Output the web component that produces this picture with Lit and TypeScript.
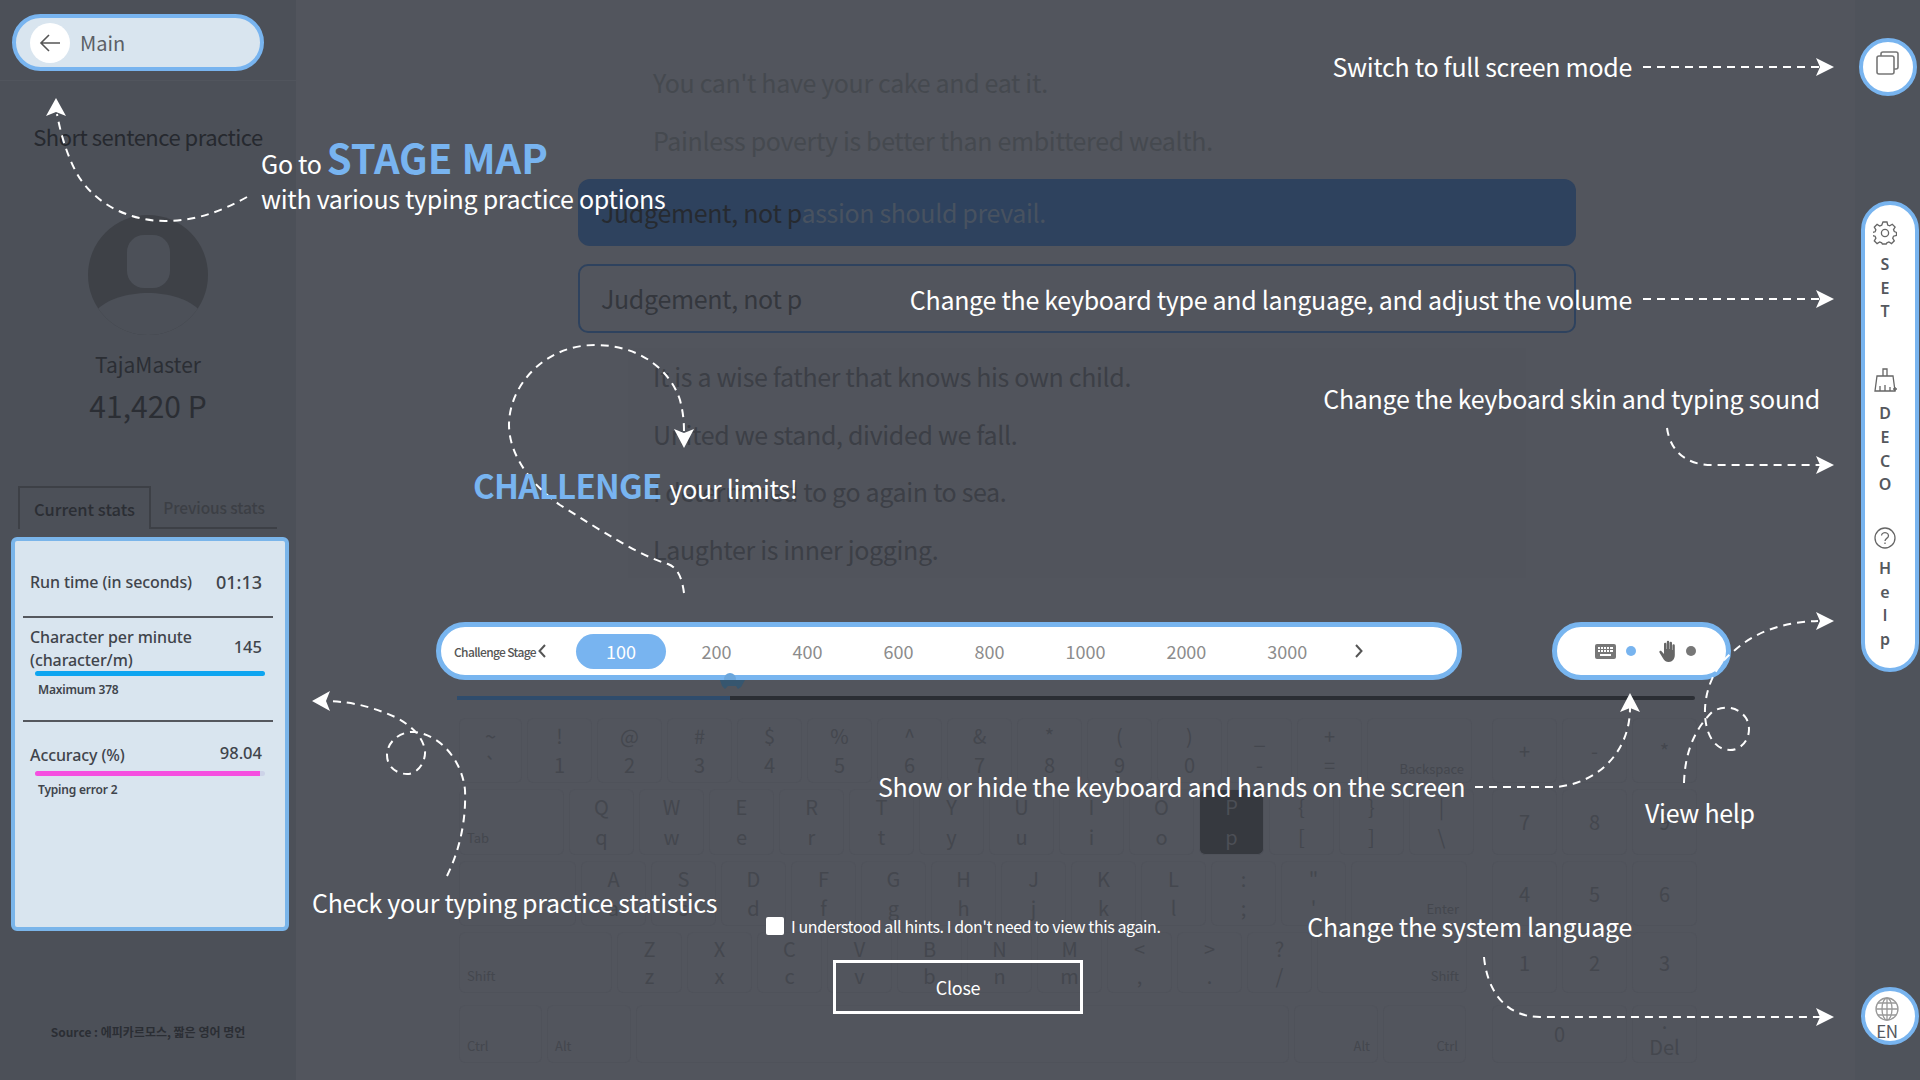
import { LitElement, html, css, svg } from 'lit';
import { customElement } from 'lit/decorators.js';

const topRows = ["You can't have your cake and eat it.", 'Painless poverty is better than embittered wealth.'];
const lowerRows = [
  'It is a wise father that knows his own child.',
  'United we stand, divided we fall.',
  'I determined to go again to sea.',
  'Laughter is inner jogging.',
];
const stages = ['200', '400', '600', '800', '1000', '2000', '3000'];

type Key = { up?: string; low?: string; label?: string; w?: number; side?: string; on?: boolean };
const pair = (s: string): Key[] => s.split(' ').map((p) => ({ up: p[0], low: p[1] }));

const keyRows: Key[][] = [
  [{ up: '~', low: '`', w: 63 }, ...pair('!1 @2 #3 $4 %5 ^6 &7 *8 (9 )0 _- +='), { label: 'Backspace', w: 105, side: 'right drop' }],
  [{ label: 'Tab', w: 105 }, ...pair('Qq Ww Ee Rr Tt Yy Uu Ii Oo'), { up: 'P', low: 'p', on: true }, ...pair('{[ }] |\\')],
  [{ label: '', w: 117 }, ...pair('Aa Ss Dd Ff Gg Hh Jj Kk Ll :; "\''), { label: 'Enter', w: 116, side: 'right' }],
  [{ label: 'Shift', w: 153 }, ...pair('Zz Xx Cc Vv Bb Nn Mm <, >. ?/'), { label: 'Shift', w: 150, side: 'right' }],
  [
    { label: 'Ctrl', w: 83 },
    { label: 'Alt', w: 84 },
    { label: '', w: 653 },
    { label: 'Alt', w: 84, side: 'right' },
    { label: 'Ctrl', w: 83, side: 'right' },
  ],
];
const numpad = ['+', '-', '*', '7', '8', '9', '4', '5', '6', '1', '2', '3'];

// coach mark texts: x, y of the text centre line, anchored left or right
const hints = [
  { t: 'Switch to full screen mode', x: 1632, y: 66, right: true },
  { t: 'Change the keyboard type and language, and adjust the volume', x: 1632, y: 299, right: true },
  { t: 'Change the keyboard skin and typing sound', x: 1820, y: 398, right: true },
  { t: 'with various typing practice options', x: 261, y: 198 },
  { t: 'Check your typing practice statistics', x: 312, y: 902 },
  { t: 'Show or hide the keyboard and hands on the screen', x: 878, y: 786 },
  { t: 'View help', x: 1645, y: 812 },
  { t: 'Change the system language', x: 1632, y: 926, right: true },
];

const dashed = [
  'M1643 67H1820',
  'M1643 299H1820',
  'M1667 428C1670 450 1685 465 1712 465H1820',
  'M1684 783C1685 750 1696 728 1712 712C1722 705 1738 706 1746 718C1754 732 1745 750 1730 750C1715 750 1706 735 1705 715C1704 690 1715 665 1735 650C1760 628 1790 622 1818 621',
  'M1475 787H1556C1600 783 1630 750 1630 708',
  'M1484 957C1487 990 1505 1017 1540 1017H1820',
  'M447 876C462 845 466 815 465 790C462 760 440 735 415 732C400 731 387 742 387 755C387 768 398 774 407 774C418 774 426 762 425 750C422 735 410 725 395 717C375 708 355 702 328 701',
  'M247 197C220 212 195 221 165 221C125 221 90 200 75 170C65 150 60 130 57 114',
  'M684 593C682 578 678 568 668 564C640 556 600 530 560 505C525 480 509 450 509 425C509 385 545 345 595 345C640 345 670 370 680 400C683 412 684 420 684 432',
];
const heads = [
  '1834,67 1816,58 1820,67 1816,76',
  '1834,299 1816,290 1820,299 1816,308',
  '1834,465 1816,456 1820,465 1816,474',
  '1834,621 1816,612 1820,621 1816,630',
  '1834,1017 1816,1008 1820,1017 1816,1026',
  '1630,693 1620,712 1630,708 1640,712',
  '312,701 330,691 326,701 330,711',
  '56,98 46,116 56,112 66,116',
  '684,448 674,429 684,433 694,429',
];

@customElement('app-root')
export class AppRoot extends LitElement {
  static styles = css`
    :host {
      display: block;
      width: 1920px;
      height: 1080px;
      overflow: hidden;
      position: relative;
      background: #52555d;
      font-family: 'Noto Sans CJK KR', 'Noto Sans', sans-serif;
      color: #2b2e34;
    }
    .page {
      display: flex;
      height: 1080px;
    }

    /* left column */
    .side {
      width: 296px;
      flex: none;
      background: #4c5058;
      display: flex;
      flex-direction: column;
      align-items: center;
    }
    .side-head {
      align-self: stretch;
      height: 81px;
      box-sizing: border-box;
      border-bottom: 1px solid #51555d;
      padding: 14px 0 0 12px;
    }
    .back {
      width: 252px;
      height: 57px;
      box-sizing: border-box;
      border: 4px solid #78b4ef;
      border-radius: 29px;
      background: #d9e5ef;
      display: flex;
      align-items: center;
      gap: 10px;
      padding-left: 14px;
      font-size: 20px;
      color: #5b5f66;
    }
    .back-circle {
      width: 40px;
      height: 40px;
      border-radius: 50%;
      background: #fff;
      display: flex;
      align-items: center;
      justify-content: center;
    }
    .title {
      margin-top: 38px;
      height: 34px;
      line-height: 34px;
      font-size: 22px;
      letter-spacing: -0.5px;
      color: #26292f;
    }
    .avatar {
      margin-top: 62px;
      display: block;
    }
    .name {
      margin-top: 14px;
      line-height: 30px;
      font-size: 21px;
    }
    .points {
      margin-top: 4px;
      line-height: 44px;
      font-size: 30px;
    }
    .tabs {
      align-self: flex-start;
      display: flex;
      margin: 59px 0 0 18px;
      width: 259px;
      height: 41px;
      border-bottom: 2px solid #3d4046;
      box-sizing: content-box;
      font-size: 16.5px;
    }
    .tab {
      display: flex;
      align-items: center;
      justify-content: center;
      font-weight: 500;
    }
    .tab.on {
      width: 130px;
      border: 2px solid #3d4046;
      border-bottom: 0;
      margin-bottom: -2px;
      background: #4c5058;
    }
    .tab.off {
      width: 127px;
      color: #3c3f45;
      font-size: 15.5px;
      letter-spacing: -0.1px;
    }
    .stats {
      align-self: flex-start;
      margin: 8px 0 0 11px;
      width: 278px;
      height: 394px;
      box-sizing: border-box;
      border: 4px solid #7ab5ea;
      border-radius: 6px;
      background: #d9e5ef;
      padding: 0 12px 0 8px;
      color: #40444b;
      font-family: 'Noto Sans', sans-serif;
      font-size: 16px;
      font-weight: 500;
      letter-spacing: -0.1px;
    }
    .stat {
      display: flex;
      justify-content: space-between;
      align-items: center;
      padding: 0 11px 0 7px;
      line-height: 23px;
    }
    .stat.run {
      height: 77px;
      box-sizing: border-box;
      padding-top: 7px;
      border-bottom: 2px solid #55585e;
    }
    .stat-value {
      font-size: 18px;
      letter-spacing: 0;
    }
    .stat-raise {
      margin-top: -6px;
      font-size: 16.5px;
      letter-spacing: 0;
    }
    .stat-block {
      height: 104px;
      box-sizing: border-box;
      border-bottom: 2px solid #55585e;
    }
    .stat-block.last {
      border: 0;
    }
    .stat.cpm {
      padding-top: 8px;
    }
    .stat.acc {
      padding-top: 22px;
    }
    .bar {
      margin: -1px 8px 0 12px;
      height: 5px;
      border-radius: 3px;
      background: #cdd3e8;
      overflow: hidden;
    }
    .stat.acc + .bar {
      margin-top: 4px;
    }
    .bar div {
      height: 100%;
    }
    .bar .cyan {
      background: #0ea5f0;
    }
    .bar .pink {
      background: #f54fe0;
    }
    .bar-note {
      margin: 5px 0 0 15px;
      font-size: 12px;
      font-weight: 600;
      letter-spacing: -0.2px;
      line-height: 18px;
    }
    .source {
      margin-top: 92px;
      font-size: 12px;
      font-weight: 700;
      line-height: 18px;
    }

    /* practice column */
    .main {
      flex: 1;
      min-width: 0;
    }
    .sentences {
      margin-left: 282px;
      width: 998px;
      padding-top: 53px;
      font-size: 25px;
      letter-spacing: -0.35px;
      color: #45494f;
    }
    .row {
      height: 58px;
      line-height: 58px;
      padding-left: 75px;
    }
    .row.low {
      height: 57.5px;
      line-height: 57.5px;
      color: #3c3f46;
      background: #51545c;
      margin: 0 50px 0 50px;
      padding-left: 25px;
    }
    .active {
      margin-top: 10px;
      height: 67px;
      line-height: 67px;
      padding-left: 23px;
      background: #2e425e;
      border-radius: 12px;
      color: #485260;
    }
    .active b {
      font-weight: 400;
      color: #262a30;
    }
    .typed {
      margin: 18px 0 15px;
      height: 69px;
      line-height: 65px;
      box-sizing: border-box;
      padding-left: 21px;
      border: 2px solid #2e425e;
      border-radius: 10px;
      color: #34373d;
    }
    .controls {
      display: flex;
      margin: 44px 0 0 140px;
      gap: 90px;
    }
    .stage {
      width: 1026px;
      height: 58px;
      box-sizing: border-box;
      border: 5px solid #78b5ef;
      border-radius: 29px;
      background: #fff;
      display: flex;
      align-items: center;
      padding-left: 13px;
      color: #8c8c8c;
      font-size: 18px;
    }
    .stage-label {
      font-size: 12px;
      font-weight: 500;
      letter-spacing: -0.65px;
      white-space: nowrap;
      color: #555;
      width: 84px;
      flex: none;
    }
    .stage svg.prev {
      margin-right: 30px;
      flex: none;
    }
    .stage span.num {
      padding: 0 30.5px;
      line-height: 35px;
    }
    .stage span.cur {
      padding: 0 30px;
      background: #78b4f0;
      color: #fff;
      border-radius: 18px;
      margin-right: 5px;
    }
    .stage svg.next {
      margin-left: 17px;
      flex: none;
    }
    .toggle {
      width: 179px;
      height: 58px;
      box-sizing: border-box;
      border: 5px solid #78b5ef;
      border-radius: 29px;
      background: #fff;
      display: flex;
      align-items: center;
      justify-content: center;
      padding-left: 8px;
    }
    .dot {
      width: 10px;
      height: 10px;
      border-radius: 50%;
      background: #78b4ef;
      margin: 0 23px 0 10px;
    }
    .dot.grey {
      background: #777;
      margin: 0 0 0 9px;
    }
    .slider {
      position: relative;
      margin: 16px 0 0 161px;
      width: 1238px;
      height: 4px;
      background: #2b2e34;
      border-radius: 2px;
    }
    .slider-fill {
      height: 100%;
      width: 273px;
      background: #2f4c6c;
    }
    .thumb {
      position: absolute;
      left: 263px;
      top: -23px;
    }
    .keyboard {
      display: flex;
      gap: 20px;
      margin: 18px 0 0 163px;
    }
    .keys {
      display: grid;
      grid-template-rows: 65px 66px 65px 61px 64px;
      row-gap: 6px;
      width: 1013px;
    }
    .keys-row {
      display: flex;
      gap: 5px;
    }
    .keys-row.last {
      margin-top: 6px;
    }
    .key {
      box-sizing: border-box;
      flex: none;
      width: 65px;
      border: 1px solid #4f525a;
      border-top-color: #50535b;
      border-radius: 6px;
      display: flex;
      flex-direction: column;
      align-items: center;
      justify-content: space-around;
      padding: 2px 0;
      font-size: 20px;
      color: #44474e;
      line-height: 26px;
    }
    .key.on {
      background: #36393f;
      color: #4c4f56;
    }
    .key.named {
      font-size: 13px;
      justify-content: flex-end;
      align-items: flex-start;
      padding: 0 7px 3px;
    }
    .key.named.right {
      align-items: flex-end;
    }
    .key.named.drop {
      padding-bottom: 0;
    }
    .numpad {
      display: grid;
      grid-template-columns: repeat(3, 65px);
      grid-template-rows: 65px 66px 65px 61px 64px;
      gap: 6px 5px;
    }
    .numpad .key.span2 {
      grid-column: span 2;
      width: auto;
      margin-top: 6px;
    }
    .numpad .key.del {
      margin-top: 6px;
    }

    /* right rail */
    .rail {
      width: 65px;
      flex: none;
      background: #4f535b;
      display: flex;
      flex-direction: column;
      align-items: center;
      padding-top: 38px;
      box-sizing: border-box;
    }
    .round {
      width: 58px;
      height: 58px;
      box-sizing: border-box;
      border: 4px solid #78b4ef;
      border-radius: 50%;
      background: #fff;
      display: flex;
      flex-direction: column;
      align-items: center;
      justify-content: center;
      color: #55585e;
      flex: none;
    }
    .round svg.screen {
      margin-bottom: 8px;
    }
    .menu {
      margin: 105px 0 0 5px;
      width: 58px;
      height: 471px;
      box-sizing: border-box;
      border: 4px solid #78b4ef;
      border-radius: 29px;
      background: #fff;
      display: flex;
      flex-direction: column;
      align-items: center;
      padding-top: 16px;
      color: #55585e;
      font-family: 'Noto Sans', sans-serif;
      font-size: 16px;
      font-weight: 600;
    }
    .menu svg {
      margin-right: 10px;
      flex: none;
    }
    .letters {
      display: flex;
      flex-direction: column;
      margin: 8px 10px 30px 0;
      align-items: center;
      line-height: 23.7px;
    }
    .letters.set {
      margin-bottom: 44px;
    }
    .lang {
      margin: 315px 0 0 5px;
      font-size: 17px;
      letter-spacing: -0.5px;
      line-height: 20px;
      padding: 5px 6px 0 0;
    }

    /* coach marks */
    .overlay {
      position: absolute;
      inset: 0;
      color: #fff;
      font-size: 25px;
      letter-spacing: -0.3px;
      white-space: nowrap;
    }
    .overlay svg.lines {
      position: absolute;
      left: 0;
      top: 0;
    }
    .hint {
      position: absolute;
      line-height: 34px;
    }
    .goto {
      position: absolute;
      left: 261px;
      top: 128px;
      line-height: 58px;
      display: flex;
      align-items: baseline;
      gap: 5px;
    }
    .big {
      color: #78b4f0;
      font-size: 40px;
      font-weight: 700;
      letter-spacing: 0;
    }
    .limits {
      position: absolute;
      left: 473px;
      top: 460px;
      line-height: 50px;
      display: flex;
      align-items: baseline;
      gap: 8px;
    }
    .limits .big {
      font-size: 33px;
      letter-spacing: -0.7px;
    }
    .again {
      position: absolute;
      left: 766px;
      top: 914px;
      display: flex;
      align-items: center;
      gap: 7px;
      font-size: 16px;
      letter-spacing: -0.4px;
      line-height: 24px;
    }
    .box {
      width: 18px;
      height: 18px;
      background: #fff;
      border-radius: 2px;
    }
    .close {
      position: absolute;
      left: 833px;
      top: 960px;
      width: 250px;
      height: 54px;
      box-sizing: border-box;
      border: 3px solid #fff;
      display: flex;
      align-items: center;
      justify-content: center;
      font-size: 18px;
    }
  `;

  renderKey(k: Key) {
    if (k.label !== undefined) {
      return html`<div class="key named ${k.side ?? ''}" style="width:${k.w}px">${k.label}</div>`;
    }
    const style = k.w ? `width:${k.w}px` : '';
    return html`<div class="key ${k.on ? 'on' : ''}" style=${style}><span>${k.up}</span><span>${k.low}</span></div>`;
  }

  renderSide() {
    return html`
      <aside class="side">
        <div class="side-head">
          <div class="back">
            <span class="back-circle">
              <svg width="22" height="20" viewBox="0 0 22 20" fill="none" stroke="#555" stroke-width="1.6">
                <path d="M21 10H2M10 2L2 10L10 18" />
              </svg>
            </span>
            Main
          </div>
        </div>
        <div class="title">Short sentence practice</div>
        <svg class="avatar" width="120" height="120" viewBox="0 0 120 120">
          <defs>
            <clipPath id="face"><circle cx="60" cy="60" r="60" /></clipPath>
          </defs>
          <circle cx="60" cy="60" r="60" fill="#3e4147" />
          <g clip-path="url(#face)">
            <path d="M8 96C18 84 40 78 60 78C80 78 102 84 112 96V125H8Z" fill="#4c5058" />
          </g>
          <rect x="39" y="20" width="43" height="53" rx="17" fill="#4c5058" />
        </svg>
        <div class="name">TajaMaster</div>
        <div class="points">41,420 P</div>
        <div class="tabs">
          <div class="tab on">Current stats</div>
          <div class="tab off">Previous stats</div>
        </div>
        <div class="stats">
          <div class="stat run">
            <span>Run time (in seconds)</span><span class="stat-value">01:13</span>
          </div>
          <div class="stat-block">
            <div class="stat cpm">
              <span>Character per minute<br />(character/m)</span><span class="stat-raise">145</span>
            </div>
            <div class="bar"><div class="cyan" style="width:100%"></div></div>
            <div class="bar-note">Maximum 378</div>
          </div>
          <div class="stat-block last">
            <div class="stat acc"><span>Accuracy (%)</span><span class="stat-raise">98.04</span></div>
            <div class="bar"><div class="pink" style="width:98%"></div></div>
            <div class="bar-note">Typing error 2</div>
          </div>
        </div>
        <div class="source">Source : 에피카르모스, 짧은 영어 명언</div>
      </aside>
    `;
  }

  renderMain() {
    return html`
      <main class="main">
        <div class="sentences">
          ${topRows.map((r) => html`<div class="row">${r}</div>`)}
          <div class="active"><b>Judgement, not p</b>assion should prevail.</div>
          <div class="typed">Judgement, not p</div>
          ${lowerRows.map((r) => html`<div class="row low">${r}</div>`)}
        </div>
        <div class="controls">
          <div class="stage">
            <span class="stage-label">Challenge Stage</span>
            <svg class="prev" width="8" height="14" viewBox="0 0 8 14" fill="none" stroke="#555" stroke-width="2">
              <path d="M7 1L1.5 7L7 13" />
            </svg>
            <span class="num cur">100</span>
            ${stages.map((s) => html`<span class="num">${s}</span>`)}
            <svg class="next" width="8" height="14" viewBox="0 0 8 14" fill="none" stroke="#555" stroke-width="2">
              <path d="M1 1L6.5 7L1 13" />
            </svg>
          </div>
          <div class="toggle">
            <svg width="21" height="15" viewBox="0 0 21 15">
              <rect width="21" height="15" rx="2" fill="#777" />
              <path
                d="M3 3h2v2H3zM6 3h2v2H6zM9 3h2v2H9zM12 3h2v2h-2zM15 3h3v2h-3zM3 6h2v2H3zM6 6h2v2H6zM9 6h2v2H9zM12 6h2v2h-2zM15 6h3v2h-3zM5 10h11v2H5z"
                fill="#fff"
              />
            </svg>
            <span class="dot"></span>
            <svg width="18" height="22" viewBox="0 0 18 22" fill="#666">
              <path
                d="M5 9V4a1.2 1.2 0 0 1 2.4 0v5h.4V2a1.2 1.2 0 0 1 2.4 0v7h.4V3a1.2 1.2 0 0 1 2.4 0v7h.4V5.500a1.200 1.200 0 0 1 2.400 0V15c0 4-2.500 7-6 7-3 0-4.500-1.500-6-4L.500 12.500c-.700-1.200 1-2.400 2-1.300L5 14z"
              />
            </svg>
            <span class="dot grey"></span>
          </div>
        </div>
        <div class="slider">
          <div class="slider-fill"></div>
          <svg class="thumb" width="26" height="20" viewBox="0 0 26 20">
            <circle cx="10" cy="6" r="6" fill="#6ba6dc" />
            <path d="M0 7H25L21 14L18 16L16 13H8L5 16L2 13Z" fill="#36566f" />
          </svg>
        </div>
        <div class="keyboard">
          <div class="keys">
            ${keyRows.map(
              (row, i) => html`<div class="keys-row ${i === 4 ? 'last' : ''}">${row.map((k) => this.renderKey(k))}</div>`
            )}
          </div>
          <div class="numpad">
            ${numpad.map((n) => html`<div class="key"><span>${n}</span></div>`)}
            <div class="key span2"><span>0</span></div>
            <div class="key del"><span>.</span><span>Del</span></div>
          </div>
        </div>
      </main>
    `;
  }

  renderRail() {
    return html`
      <nav class="rail">
        <div class="round">
          <svg class="screen" width="23" height="24" viewBox="0 0 23 24" fill="none" stroke="#777" stroke-width="1.6">
            <rect x="1" y="5" width="17" height="18" rx="2" />
            <path d="M5 5V3a2 2 0 0 1 2-2h13a2 2 0 0 1 2 2v13a2 2 0 0 1-2 2h-2" />
          </svg>
        </div>
        <div class="menu">
          <svg width="24" height="24" viewBox="0 0 24 24" fill="none" stroke="#666" stroke-width="1.300">
            <circle cx="12" cy="12" r="3.600" />
            <path
              d="M10 1h4l.7 3 2 .8 2.600-1.600 2.800 2.800-1.600 2.600.8 2L23.500 11.500v3l-3 .7-.8 2 1.600 2.600-2.800 2.800-2.600-1.600-2 .8-.7 1.200h-3.800l-.7-1.200-2-.8-2.600 1.600-2.800-2.800 1.600-2.600-.8-2-3-.7v-3l3-.7.8-2-1.600-2.600 2.800-2.800 2.600 1.600 2-.8z"
            />
          </svg>
          <div class="letters set"><span>S</span><span>E</span><span>T</span></div>
          <svg width="24" height="26" viewBox="0 0 24 26" fill="none" stroke="#666" stroke-width="1.300">
            <path d="M10 1h4v7h6l2 15H2L4 8h6zM4 8h16" />
            <path d="M7 23v-5M12 23v-6M17 23v-4M20 21h4M22 19v4" />
          </svg>
          <div class="letters"><span>D</span><span>E</span><span>C</span><span>O</span></div>
          <svg width="22" height="22" viewBox="0 0 22 22" fill="none" stroke="#666" stroke-width="1.300">
            <circle cx="11" cy="11" r="10" />
            <path d="M7.500 8.500a3.500 3 0 1 1 5.500 2.600c-1.200.8-2 1.400-2 3" />
            <path d="M11 15.500v1.500" />
          </svg>
          <div class="letters"><span>H</span><span>e</span><span>l</span><span>p</span></div>
        </div>
        <div class="round lang">
          <svg width="24" height="24" viewBox="0 0 24 24" fill="none" stroke="#999" stroke-width="1.300">
            <circle cx="12" cy="12" r="11" />
            <ellipse cx="12" cy="12" rx="5" ry="11" />
            <path d="M12 1v22M1 12h22M3 6h18M3 18h18" />
          </svg>
          EN
        </div>
      </nav>
    `;
  }

  renderOverlay() {
    return html`
      <div class="overlay">
        <svg class="lines" width="1920" height="1080" viewBox="0 0 1920 1080">
          ${dashed.map((d) => svg`<path d=${d} fill="none" stroke="#fff" stroke-width="2" stroke-dasharray="8 6" />`)}
          ${heads.map((p) => svg`<polygon points=${p} fill="#fff" />`)}
        </svg>
        <div class="goto"><span>Go to</span><span class="big">STAGE MAP</span></div>
        <div class="limits"><span class="big">CHALLENGE</span><span>your limits!</span></div>
        ${hints.map((h) => {
          const place = h.right ? `right:${1920 - h.x}px` : `left:${h.x}px`;
          return html`<div class="hint" style="${place};top:${h.y - 17}px">${h.t}</div>`;
        })}
        <div class="again"><span class="box"></span>I understood all hints. I don't need to view this again.</div>
        <div class="close">Close</div>
      </div>
    `;
  }

  render() {
    return html`
      <div class="page">${this.renderSide()} ${this.renderMain()} ${this.renderRail()}</div>
      ${this.renderOverlay()}
    `;
  }
}
